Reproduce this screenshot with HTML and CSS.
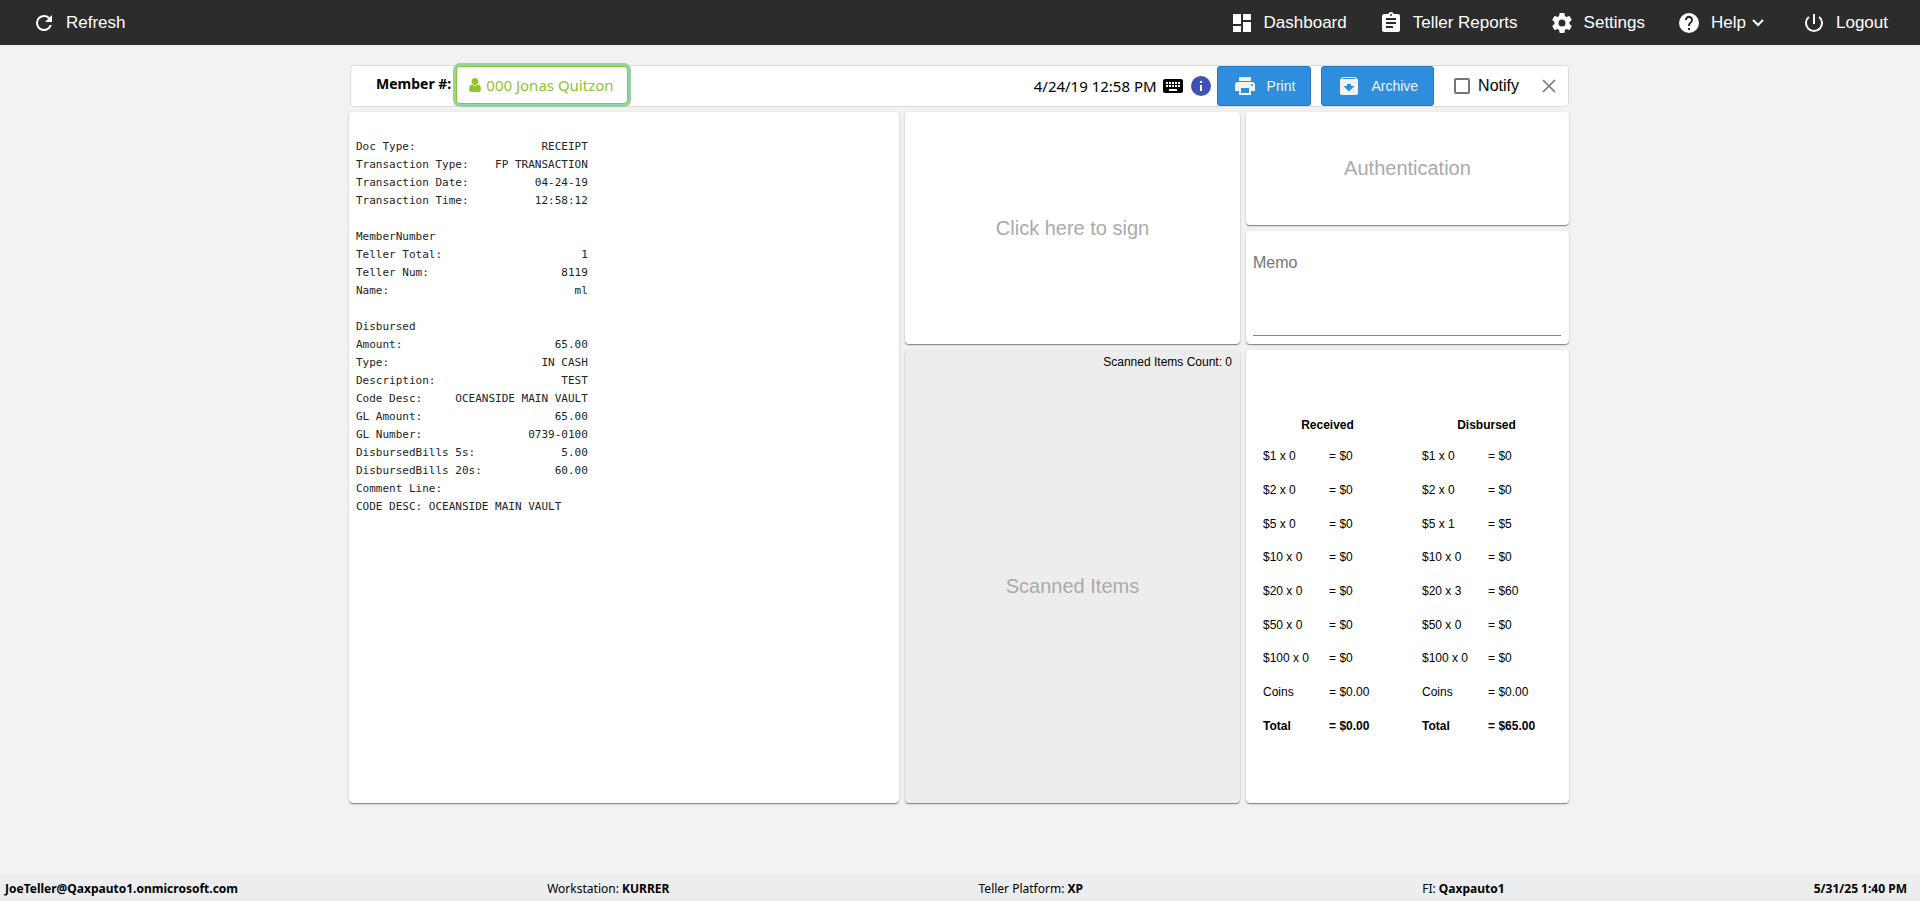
FILE: index.html
```html
<!DOCTYPE html>
<html lang="en">
<head>
<meta charset="utf-8">
<title>Receipt</title>
<link rel="stylesheet" href="styles.css">
</head>
<body>
<header class="topbar">
  <a class="nav-link" href="#"><svg class="icon" viewBox="0 0 24 24"><path d="M17.65 6.35A7.96 7.96 0 0 0 12 4a8 8 0 1 0 7.73 10h-2.08A6 6 0 1 1 12 6c1.66 0 3.14.69 4.22 1.78L13 11h7V4z"/></svg>Refresh</a>
  <nav class="nav">
    <a class="nav-link" href="#"><svg class="icon" viewBox="0 0 24 24"><path d="M3 13h8V3H3zm0 8h8v-6H3zm10 0h8V11h-8zm0-18v6h8V3z"/></svg>Dashboard</a>
    <a class="nav-link" href="#"><svg class="icon" viewBox="0 0 24 24"><path d="M19 3h-4.18C14.4 1.84 13.3 1 12 1s-2.4.84-2.82 2H5a2 2 0 0 0-2 2v14c0 1.1.9 2 2 2h14a2 2 0 0 0 2-2V5a2 2 0 0 0-2-2zm-7 0a1 1 0 1 1 0 2 1 1 0 0 1 0-2zm2 14H7v-2h7zm3-4H7v-2h10zm0-4H7V7h10z"/></svg>Teller Reports</a>
    <a class="nav-link" href="#"><svg class="icon" viewBox="0 0 24 24"><path d="M19.43 12.98c.04-.32.07-.64.07-.98s-.03-.66-.07-.98l2.11-1.65c.19-.15.24-.42.12-.64l-2-3.46c-.12-.22-.39-.3-.61-.22l-2.49 1c-.52-.4-1.08-.73-1.69-.98l-.38-2.65A.49.49 0 0 0 14 2h-4c-.25 0-.46.18-.49.42l-.38 2.65c-.61.25-1.17.59-1.69.98l-2.49-1c-.23-.09-.49 0-.61.22l-2 3.46c-.13.22-.07.49.12.64l2.11 1.65c-.04.32-.07.65-.07.98s.03.66.07.98l-2.11 1.65c-.19.15-.24.42-.12.64l2 3.46c.12.22.39.3.61.22l2.49-1c.52.4 1.08.73 1.69.98l.38 2.65c.03.24.24.42.49.42h4c.25 0 .46-.18.49-.42l.38-2.65c.61-.25 1.17-.59 1.69-.98l2.49 1c.23.09.49 0 .61-.22l2-3.46c.12-.22.07-.49-.12-.64zM12 15.5a3.5 3.5 0 1 1 0-7 3.5 3.5 0 0 1 0 7z"/></svg>Settings</a>
    <a class="nav-link" href="#"><svg class="icon" viewBox="0 0 24 24"><path d="M12 2a10 10 0 1 0 0 20 10 10 0 0 0 0-20zm1 17h-2v-2h2zm2.07-7.75-.9.92C13.45 12.9 13 13.5 13 15h-2v-.5c0-1.1.45-2.1 1.17-2.83l1.24-1.26A2 2 0 1 0 10 9H8a4 4 0 1 1 7.07 2.25z"/></svg>Help<svg class="chevron" viewBox="0 0 12 8"><path d="m1 1 5 5 5-5"/></svg></a>
    <a class="nav-link" href="#"><svg class="icon" viewBox="0 0 24 24"><path d="M13 3h-2v10h2zm4.83 2.17-1.42 1.42A7 7 0 1 1 7.58 6.58L6.17 5.17a9 9 0 1 0 11.66 0z"/></svg>Logout</a>
  </nav>
</header>

<main class="content">
  <section class="toolbar">
    <span class="member-label">Member #:</span>
    <button class="member-button" type="button"><svg class="user-icon" viewBox="0 128 1280 1536"><path d="M1280 1399q0 109-62.500 187t-150.500 78h-854q-88 0-150.500-78t-62.500-187q0-85 8.500-160.500t31.500-152 58.500-131 94-89 134.500-34.500q131 128 313 128t313-128q76 0 134.500 34.500t94 89 58.500 131 31.500 152 8.500 160.500zm-256-887q0 159-112.500 271.500t-271.500 112.500-271.500-112.500-112.500-271.500 112.500-271.500 271.500-112.500 271.500 112.500 112.500 271.500z"/></svg>000 Jonas Quitzon</button>
    <div class="actions">
      <time class="date">4/24/19 12:58 PM</time>
      <svg class="small-icon" viewBox="0 0 24 24"><path d="M20 5H4c-1.100 0-2 .9-2 2v10c0 1.100.9 2 2 2h16c1.100 0 2-.9 2-2V7c0-1.100-.9-2-2-2zm-9 3h2v2h-2zm0 3h2v2h-2zM8 8h2v2H8zm0 3h2v2H8zm-1 2H5v-2h2zm0-3H5V8h2zm9 7H8v-2h8zm0-4h-2v-2h2zm0-3h-2V8h2zm3 3h-2v-2h2zm0-3h-2V8h2z"/></svg>
      <svg class="small-icon info" viewBox="0 0 24 24"><path d="M12 2a10 10 0 1 0 0 20 10 10 0 0 0 0-20zm1 15h-2v-6h2zm0-8h-2V7h2z"/></svg>
      <button class="action" type="button"><svg class="icon" viewBox="0 0 24 24"><path d="M19 8H5a3 3 0 0 0-3 3v6h4v4h12v-4h4v-6a3 3 0 0 0-3-3zm-3 11H8v-5h8zm3-7a1 1 0 1 1 0-2 1 1 0 0 1 0 2zm-1-9H6v4h12z"/></svg>Print</button>
      <button class="action archive" type="button"><svg class="icon" viewBox="0 0 24 24"><path d="m20.540 5.230-1.390-1.680C18.880 3.210 18.470 3 18 3H6c-.47 0-.88.21-1.160.55L3.460 5.230C3.170 5.570 3 6.020 3 6.500V19c0 1.100.9 2 2 2h14c1.100 0 2-.9 2-2V6.500c0-.48-.17-.93-.46-1.270zM12 17.500 6.500 12H10v-2h4v2h3.500zM5.120 5l.81-1h12l.94 1z"/></svg>Archive</button>
      <label class="notify"><input class="checkbox" type="checkbox">Notify</label>
      <button class="close" type="button" aria-label="Close"><svg class="close-icon" viewBox="0 0 14 14"><path stroke-width="1.6" d="m1 1 12 12M13 1 1 13"/></svg></button>
    </div>
  </section>

  <div class="cards">
    <section class="card receipt"><pre class="receipt-text">Doc Type:                   RECEIPT
Transaction Type:    FP TRANSACTION
Transaction Date:          04-24-19
Transaction Time:          12:58:12

MemberNumber
Teller Total:                     1
Teller Num:                    8119
Name:                            ml

Disbursed
Amount:                       65.00
Type:                       IN CASH
Description:                   TEST
Code Desc:     OCEANSIDE MAIN VAULT
GL Amount:                    65.00
GL Number:                0739-0100
DisbursedBills 5s:             5.00
DisbursedBills 20s:           60.00
Comment Line:
CODE DESC: OCEANSIDE MAIN VAULT</pre></section>
    <button class="card prompt sign" type="button">Click here to sign</button>
    <div class="side">
      <section class="card prompt">Authentication</section>
      <section class="card memo"><textarea class="memo-input" placeholder="Memo" aria-label="Memo"></textarea></section>
    </div>
    <section class="card scanned">
      <span class="count">Scanned Items Count: 0</span>
      <span class="prompt scanned-title">Scanned Items</span>
    </section>
    <section class="card cash">
      <table class="bills">
        <colgroup><col class="denomination"><col></colgroup>
        <thead><tr><th colspan="2">Received</th></tr></thead>
        <tbody>
          <tr><td>$1 x 0</td><td>= $0</td></tr>
          <tr><td>$2 x 0</td><td>= $0</td></tr>
          <tr><td>$5 x 0</td><td>= $0</td></tr>
          <tr><td>$10 x 0</td><td>= $0</td></tr>
          <tr><td>$20 x 0</td><td>= $0</td></tr>
          <tr><td>$50 x 0</td><td>= $0</td></tr>
          <tr><td>$100 x 0</td><td>= $0</td></tr>
          <tr><td>Coins</td><td>= $0.00</td></tr>
          <tr class="total"><td>Total</td><td>= $0.00</td></tr>
        </tbody>
      </table>
      <table class="bills">
        <colgroup><col class="denomination"><col></colgroup>
        <thead><tr><th colspan="2">Disbursed</th></tr></thead>
        <tbody>
          <tr><td>$1 x 0</td><td>= $0</td></tr>
          <tr><td>$2 x 0</td><td>= $0</td></tr>
          <tr><td>$5 x 1</td><td>= $5</td></tr>
          <tr><td>$10 x 0</td><td>= $0</td></tr>
          <tr><td>$20 x 3</td><td>= $60</td></tr>
          <tr><td>$50 x 0</td><td>= $0</td></tr>
          <tr><td>$100 x 0</td><td>= $0</td></tr>
          <tr><td>Coins</td><td>= $0.00</td></tr>
          <tr class="total"><td>Total</td><td>= $65.00</td></tr>
        </tbody>
      </table>
    </section>
  </div>
</main>

<footer class="statusbar">
  <strong>JoeTeller@Qaxpauto1.onmicrosoft.com</strong>
  <span>Workstation: <strong>KURRER</strong></span>
  <span>Teller Platform: <strong>XP</strong></span>
  <span class="institution">FI: <strong>Qaxpauto1</strong></span>
  <strong>5/31/25 1:40 PM</strong>
</footer>
</body>
</html>
```
FILE: styles.css
```css
* { box-sizing: border-box; }

body {
  display: flex;
  flex-direction: column;
  min-height: 100vh;
  margin: 0;
  background: #f2f2f2;
  color: #000;
  font-family: "Liberation Sans", Arial, sans-serif;
}

button { font: inherit; cursor: pointer; }

.topbar {
  display: flex;
  justify-content: space-between;
  align-items: center;
  min-height: 45px;
  padding: 0 32px;
  background: #2c2c2c;
}

.nav { display: flex; gap: 32px; }

.nav-link {
  display: flex;
  align-items: center;
  gap: 10px;
  color: #fff;
  font-size: 17px;
  text-decoration: none;
}

.nav .nav-link:last-child { margin-left: 6px; }

.icon { width: 24px; height: 24px; fill: currentColor; }

.chevron {
  width: 12px;
  height: 8px;
  margin-left: -4px;
  fill: none;
  stroke: currentColor;
  stroke-width: 2;
}

.content {
  flex: 1;
  width: 100%;
  max-width: 1222px;
  margin: 20px auto;
  padding-right: 2px;
}

.toolbar {
  display: flex;
  align-items: center;
  min-height: 42px;
  margin-left: 1px;
  padding: 0 8px 0 25px;
  background: #fff;
  border: 1px solid #ddd;
  border-radius: 4px;
  font-family: "Noto Sans", sans-serif;
}

.member-label {
  padding-bottom: 6px;
  font-size: 14px;
  font-weight: bold;
}

.member-button {
  display: flex;
  align-items: center;
  gap: 5px;
  height: 38px;
  margin: 0 0 2px 5px;
  padding: 0 13px 0 12px;
  background: #fff;
  border: 1px solid #8fc330;
  border-radius: 4px;
  box-shadow: 0 0 0 3px #93d2a2;
  color: #8fc330;
  font-size: 15px;
}

.user-icon { width: 12px; height: 14px; fill: currentColor; }

.actions { display: flex; align-items: center; margin-left: auto; }

.date { margin-right: 4px; font-size: 15px; }

.small-icon { width: 24px; height: 24px; margin-right: 4px; }

.info { fill: #3f51b5; }

.action {
  display: flex;
  align-items: center;
  gap: 10px;
  height: 40px;
  padding: 0 15px;
  background: #2f8ddd;
  border: 1px solid #2379c4;
  border-radius: 3px;
  color: #f2f2f2;
  font-family: "Liberation Sans", Arial, sans-serif;
  font-size: 14px;
}

.archive { margin-left: 10px; }

.notify {
  display: flex;
  align-items: center;
  gap: 8px;
  margin-left: 20px;
  font-family: "Liberation Sans", Arial, sans-serif;
  font-size: 16px;
}

.checkbox {
  width: 16px;
  height: 16px;
  margin: 0;
  appearance: none;
  background: #fff;
  border: 2px solid #757575;
  border-radius: 2px;
}

.close {
  display: flex;
  margin-left: 19px;
  padding: 4px;
  background: none;
  border: 0;
}

.close-icon { width: 14px; height: 14px; fill: none; stroke: #777; }

.cards {
  display: grid;
  grid-template-columns: 550fr 335fr 323fr;
  grid-template-rows: minmax(232px, auto) minmax(453px, auto);
  gap: 6px;
  margin-top: 5px;
}

.card {
  background: #fff;
  border: 0;
  border-radius: 4px;
  box-shadow: 0 1px 1px rgba(0, 0, 0, 0.4), 0 1px 3px rgba(0, 0, 0, 0.12);
}

.receipt { grid-row: span 2; padding: 26px 7px; }

.receipt-text {
  margin: 0;
  color: #212529;
  font-family: "DejaVu Sans Mono", monospace;
  font-size: 11px;
  line-height: 18px;
}

.prompt {
  display: flex;
  align-items: center;
  justify-content: center;
  color: #aaa;
  font-size: 20px;
}

.side { display: grid; grid-template-rows: 1fr 1fr; gap: 6px; }

.memo { display: flex; padding: 20px 8px 8px 7px; }

.memo-input {
  flex: 1;
  min-width: 0;
  padding: 3px 0;
  background: none;
  border: 0;
  border-bottom: 1px solid #888;
  outline: 0;
  resize: none;
  font: 16px "Liberation Sans", Arial, sans-serif;
}

.memo-input::placeholder { color: #757575; }

.scanned {
  display: flex;
  flex-direction: column;
  padding: 5px 8px 0;
  background: #ededed;
}

.count { align-self: flex-end; font-size: 12px; }

.scanned-title { flex: 1; }

.cash {
  display: grid;
  grid-template-columns: 1fr 1fr;
  align-content: center;
  padding: 0 3px 0 2px;
}

.bills {
  width: 100%;
  border-collapse: collapse;
  table-layout: fixed;
  font-size: 12px;
}

.denomination { width: 51%; }

.bills th { height: 28px; padding: 0; }
.bills td { height: 34px; padding: 0; }
.bills tr:nth-child(3n) td { height: 33px; }
.bills td:first-child { padding-left: 15px; }
.total { font-weight: bold; }

.statusbar {
  display: flex;
  justify-content: space-between;
  align-items: center;
  min-height: 26px;
  padding: 0 13px 0 5px;
  background: #ebedef;
  font-family: "Noto Sans", sans-serif;
  font-size: 12px;
}

.institution { padding-left: 30px; }
```
